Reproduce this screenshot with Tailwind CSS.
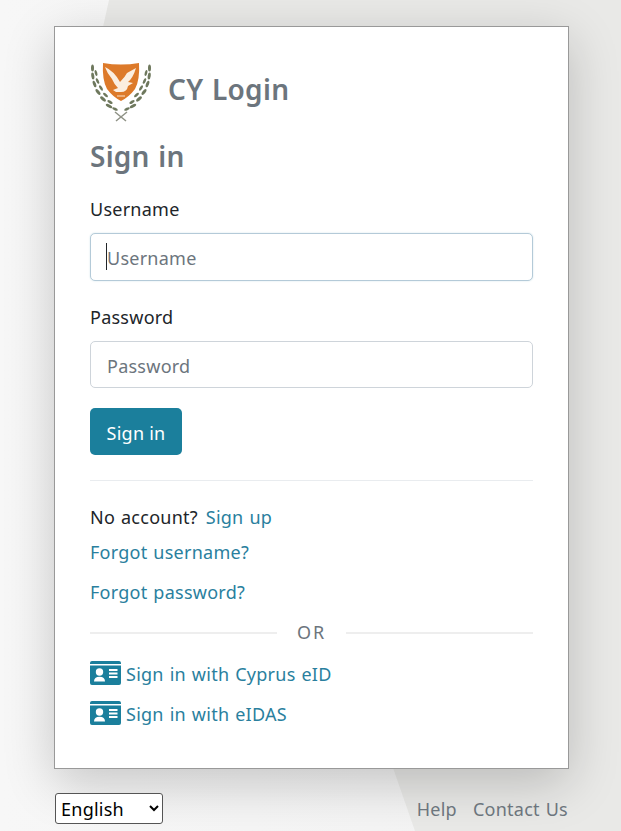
<!DOCTYPE html>
<html lang="en">
<head>
  <meta charset="UTF-8" />
  <title>CY Login</title>
  <script src="https://cdn.jsdelivr.net/npm/@tailwindcss/browser@4"></script>
</head>
<body class="relative h-[831px] overflow-hidden bg-[#f5f5f5] font-['Noto_Sans',sans-serif] text-[18px] leading-[27px] tracking-[0.25px] [word-spacing:1px] text-[#212529]">
  <!-- background shapes -->
  <svg class="absolute inset-0" width="621" height="831" viewBox="0 0 621 831">
    <defs>
      <linearGradient id="bgfade" x1="0" y1="0" x2="1" y2="0">
        <stop offset="0" stop-color="#f7f7f7" />
        <stop offset="1" stop-color="#f2f2f2" />
      </linearGradient>
    </defs>
    <rect width="621" height="831" fill="url(#bgfade)" />
    <polygon points="109,0 621,0 621,831 415,831 393,768 60,768 103,27" fill="#e9e9e7" />
  </svg>

  <div class="relative ml-[54px] w-[515px] pt-[26px]">
    <main class="h-[743px] border border-[#999] bg-white px-[35px] pt-[35px] shadow-[0_14px_48px_rgba(0,0,0,0.2)]">
      <div class="flex h-[60px] items-center gap-[16px]">
        <svg width="62" height="60" viewBox="0 0 62 60">
          <path d="M13 1 Q31 4 49 1 Q50 18 45 27 Q39 35 31 39 Q23 35 17 27 Q12 18 13 1Z" fill="#dd7a2a" />
          <path d="M15 5 Q24 9 30 20 Q35 15 37 11 L46 6 Q43 16 38 20 L43 21 L38 24 Q37 30 31 30 L26 30 L23 28 L28 26 Q24 22 22 17 Q17 11 15 5Z" fill="#fbeee0" />
          <path d="M27 34h8" stroke="#fbe3cb" stroke-width="1" />
          <g fill="#5f6a4c" opacity="0.9">
            <ellipse cx="2.500" cy="6" rx="1.500" ry="3.500" />
            <ellipse cx="6" cy="11" rx="1.300" ry="3" transform="rotate(-15 6 11)" />
            <ellipse cx="2.800" cy="14" rx="1.500" ry="3.500" transform="rotate(-8 2.800 14)" />
            <ellipse cx="7.500" cy="19" rx="1.300" ry="3" transform="rotate(-25 7.500 19)" />
            <ellipse cx="4.500" cy="22" rx="1.500" ry="3.500" transform="rotate(-20 4.500 22)" />
            <ellipse cx="11" cy="26" rx="1.300" ry="3" transform="rotate(-35 11 26)" />
            <ellipse cx="8" cy="30" rx="1.500" ry="3.500" transform="rotate(-38 8 30)" />
            <ellipse cx="15.500" cy="33" rx="1.300" ry="3" transform="rotate(-50 15.500 33)" />
            <ellipse cx="13" cy="37" rx="1.500" ry="3.500" transform="rotate(-50 13 37)" />
            <ellipse cx="20" cy="40" rx="1.300" ry="3" transform="rotate(-60 20 40)" />
            <ellipse cx="19" cy="44" rx="1.500" ry="3.500" transform="rotate(-62 19 44)" />
            <ellipse cx="25" cy="47" rx="1.300" ry="3" transform="rotate(-65 25 47)" />
          </g>
          <g fill="#5f6a4c" opacity="0.9" transform="translate(62 0) scale(-1 1)">
            <ellipse cx="2.500" cy="6" rx="1.500" ry="3.500" />
            <ellipse cx="6" cy="11" rx="1.300" ry="3" transform="rotate(-15 6 11)" />
            <ellipse cx="2.800" cy="14" rx="1.500" ry="3.500" transform="rotate(-8 2.800 14)" />
            <ellipse cx="7.500" cy="19" rx="1.300" ry="3" transform="rotate(-25 7.500 19)" />
            <ellipse cx="4.500" cy="22" rx="1.500" ry="3.500" transform="rotate(-20 4.500 22)" />
            <ellipse cx="11" cy="26" rx="1.300" ry="3" transform="rotate(-35 11 26)" />
            <ellipse cx="8" cy="30" rx="1.500" ry="3.500" transform="rotate(-38 8 30)" />
            <ellipse cx="15.500" cy="33" rx="1.300" ry="3" transform="rotate(-50 15.500 33)" />
            <ellipse cx="13" cy="37" rx="1.500" ry="3.500" transform="rotate(-50 13 37)" />
            <ellipse cx="20" cy="40" rx="1.300" ry="3" transform="rotate(-60 20 40)" />
            <ellipse cx="19" cy="44" rx="1.500" ry="3.500" transform="rotate(-62 19 44)" />
            <ellipse cx="25" cy="47" rx="1.300" ry="3" transform="rotate(-65 25 47)" />
          </g>
          <path d="M26 59 L37 50 M36 59 L25 50" stroke="#8f9286" stroke-width="1.500" fill="none" />
        </svg>
        <span class="mb-[6px] text-[28px] font-semibold tracking-[0.3px] text-[#6c757d]">CY Login</span>
      </div>
      <h1 class="mt-[12px] text-[28px] leading-[45px] font-semibold text-[#6c757d]">Sign in</h1>

      <label class="mt-[17px] block">Username</label>
      <div class="relative mt-[10px]">
        <input class="block h-[48px] w-full rounded-[5px] border border-[#b4cad8] bg-white px-[16px] pt-[2px] shadow-[0_0_2px_rgba(27,127,156,0.2)] placeholder:text-[#6c757d]" placeholder="Username" />
        <span class="absolute top-[10px] left-[16px] h-[27px] w-px bg-[#212529]"></span>
      </div>

      <label class="mt-[23px] block">Password</label>
      <input class="mt-[10px] block h-[47px] w-full rounded-[5px] border border-[#ced4da] bg-white px-[16px] pt-[2px] placeholder:text-[#6c757d]" placeholder="Password" />

      <button class="mt-[20px] block h-[47px] w-[92px] rounded-[5px] bg-[#1b7f9c] pt-[3px] text-white">Sign in</button>

      <hr class="mt-[25px] border-[#e9ecef]" />

      <p class="mt-[23px]">No account? <a class="ml-[2px] text-[#2a7f9e]" href="#">Sign up</a></p>
      <a class="mt-[8px] block text-[#2a7f9e]" href="#">Forgot username?</a>
      <a class="mt-[13px] block text-[#2a7f9e]" href="#">Forgot password?</a>

      <div class="mt-[13px] flex items-center gap-[20px] text-[#6c757d]">
        <span class="h-[2px] flex-1 bg-[#eeeeee]"></span>
        <span class="tracking-[2px]">OR</span>
        <span class="h-[2px] flex-1 bg-[#eeeeee]"></span>
      </div>

      <a class="mt-[15px] flex items-center gap-[5px] text-[#2a7f9e]" href="#">
        <svg class="mb-[3px]" width="31" height="24" viewBox="0 0 31 24"><path d="M2 0h27a2 2 0 0 1 2 2v1H0V2a2 2 0 0 1 2-2zM0 4.500h31V22a2 2 0 0 1-2 2H2a2 2 0 0 1-2-2z" fill="#1b7f9c" /><circle cx="9.500" cy="11" r="3.700" fill="#fff" /><path d="M4 20.500q0-4.800 5.500-4.800T15 20.500z" fill="#fff" /><path d="M19 9h8.500M19 12.500h8.500M19 16h8.500" stroke="#fff" stroke-width="2" /></svg>
        Sign in with Cyprus eID
      </a>
      <a class="mt-[13px] flex items-center gap-[5px] text-[#2a7f9e]" href="#">
        <svg class="mb-[3px]" width="31" height="24" viewBox="0 0 31 24"><path d="M2 0h27a2 2 0 0 1 2 2v1H0V2a2 2 0 0 1 2-2zM0 4.500h31V22a2 2 0 0 1-2 2H2a2 2 0 0 1-2-2z" fill="#1b7f9c" /><circle cx="9.500" cy="11" r="3.700" fill="#fff" /><path d="M4 20.500q0-4.800 5.500-4.800T15 20.500z" fill="#fff" /><path d="M19 9h8.500M19 12.500h8.500M19 16h8.500" stroke="#fff" stroke-width="2" /></svg>
        Sign in with eIDAS
      </a>
    </main>

    <footer class="mt-[24px] flex items-center justify-between pr-px pl-px">
      <select class="h-[31px] w-[108px] rounded-[3px] border border-[#555] bg-white pl-[1px] text-[#000]">
        <option>English</option>
      </select>
      <nav class="mt-[2px] flex gap-[16px] text-[#6c757d]">
        <a href="#">Help</a>
        <a href="#">Contact Us</a>
      </nav>
    </footer>
  </div>
</body>
</html>
